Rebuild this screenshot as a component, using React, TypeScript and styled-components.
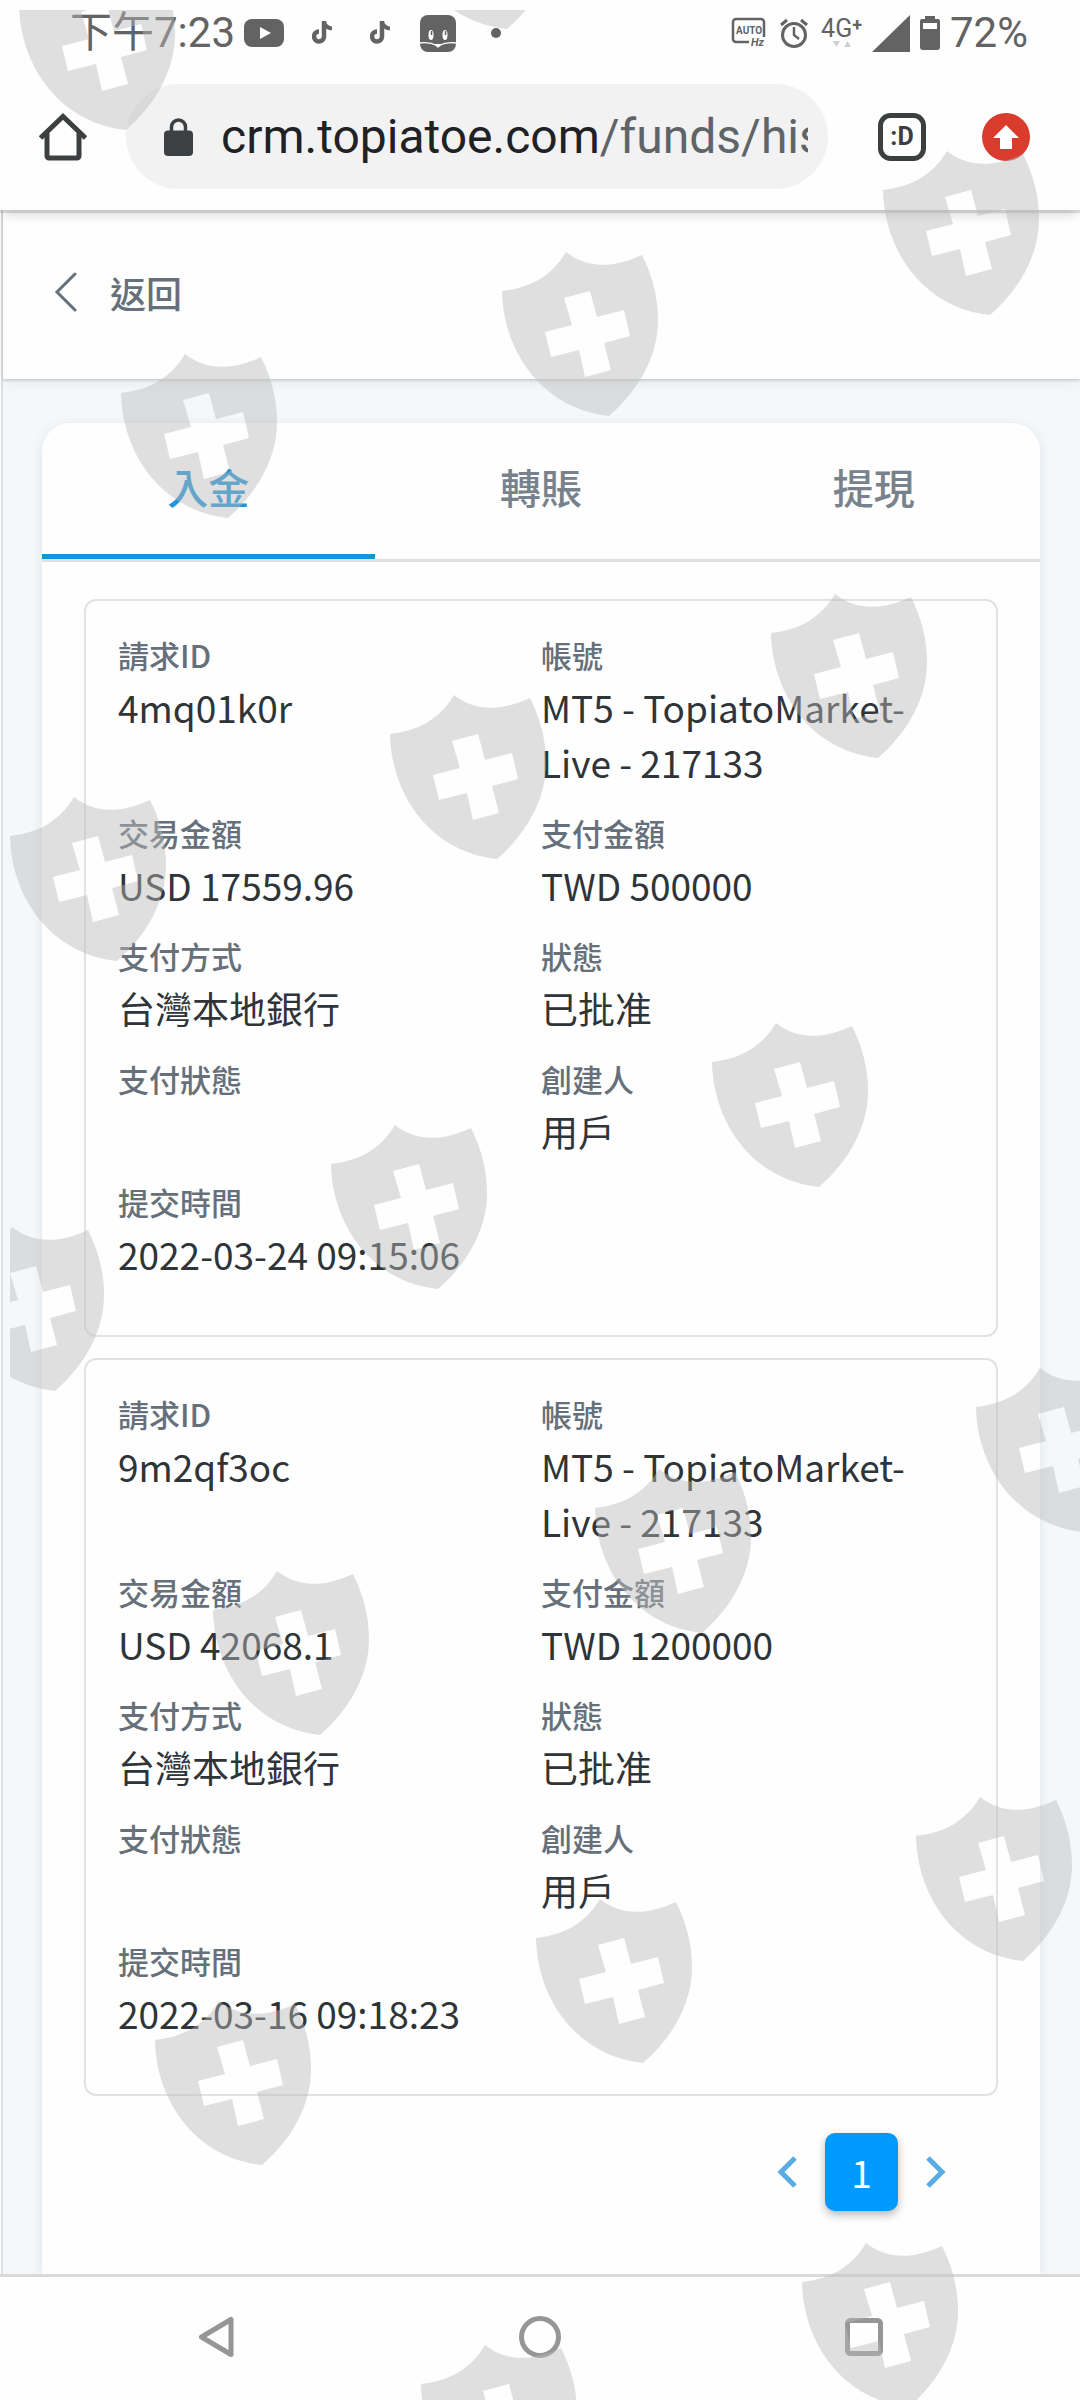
import React, { useState } from "react";
import styled, { createGlobalStyle } from "styled-components";

const GlobalStyle = createGlobalStyle`
  *, *::before, *::after { box-sizing: border-box; }
  html, body { margin: 0; padding: 0; background: #fff; }
  body { font-family: "Noto Sans CJK TC", "Noto Sans", sans-serif; }
  button { margin: 0; padding: 0; border: 0; background: none; font: inherit; color: inherit; cursor: pointer; }
  svg { display: block; flex: none; }
`;

const Screen = styled.div`
  position: relative;
  display: flex;
  flex-direction: column;
  min-height: 100vh;
  overflow: hidden;
  background: #fefefe;
`;

/* ---------- status bar ---------- */

const StatusBar = styled.div`
  display: flex;
  align-items: center;
  justify-content: space-between;
  height: 66px;
  padding: 0 52px 0 70px;
  color: #636363;
  font: 400 42px/48px Roboto, "Noto Sans CJK TC", sans-serif;
`;

const StatusGroup = styled.div`
  display: flex;
  align-items: center;
  gap: ${(p: { $gap: number }) => p.$gap}px;
`;

const NoticeSlot = styled.div`
  display: flex;
  align-items: center;
  justify-content: center;
  width: 58px;
`;

const Network = styled.div`
  display: flex;
  flex-direction: column;
  align-items: center;
  font-size: 25px;
  line-height: 22px;
`;

const NetworkName = styled.span`
  display: flex;
`;

const Plus = styled.span`
  font-size: 18px;
  line-height: 14px;
  font-weight: 700;
`;

/* ---------- browser toolbar ---------- */

const Toolbar = styled.header`
  position: relative;
  z-index: 2;
  display: flex;
  align-items: center;
  height: 144px;
  padding: 0 22px 3px 0;
  background: #fefefe;
  box-shadow: 0 3px 1px rgba(0, 0, 0, 0.12), 0 10px 10px -4px rgba(0, 0, 0, 0.12);
`;

const ToolbarButton = styled.button`
  display: flex;
  align-items: center;
  justify-content: center;
  width: ${(p: { $wide?: boolean }) => (p.$wide ? 126 : 104)}px;
  height: 105px;
`;

const AddressBar = styled.button`
  display: flex;
  flex: 1;
  align-items: center;
  gap: 28px;
  min-width: 0;
  height: 105px;
  margin-right: 22px;
  padding: 0 20px 0 38px;
  border-radius: 53px;
  background: #f2f2f3;
`;

const Address = styled.span`
  flex: 1;
  overflow: hidden;
  color: #5f6468;
  font: 400 48px/64px Roboto, sans-serif;
  text-align: left;
  white-space: nowrap;
`;

const Host = styled.span`
  color: #202124;
`;

/* ---------- page ---------- */

const Page = styled.main`
  display: flex;
  flex: 1;
  flex-direction: column;
  margin-left: 1px;
  border-left: 2px solid #dadfe3;
  background: #f4f8fb;
`;

const PageHeader = styled.div`
  position: relative;
  z-index: 1;
  display: flex;
  align-items: center;
  height: 169px;
  padding: 0 51px 6px;
  background: #fefefe;
  box-shadow: 0 2px 2px rgba(0, 0, 0, 0.12), 0 4px 12px rgba(0, 0, 0, 0.06);
`;

const BackLink = styled.a`
  display: flex;
  align-items: center;
  gap: 32px;
  color: #66707a;
  font-size: 36px;
  line-height: 54px;
  font-weight: 500;
  text-decoration: none;
`;

const Card = styled.section`
  display: flex;
  flex: 1;
  flex-direction: column;
  margin: 44px 40px 0 39px;
  border-radius: 28px 28px 0 0;
  background: #fefefe;
  box-shadow: 0 2px 12px rgba(40, 60, 80, 0.1);
`;

const TabList = styled.div`
  display: flex;
  height: 139px;
  border-bottom: 3px solid #e0e0e0;
`;

const Tab = styled.button<{ $active: boolean }>`
  flex: 1;
  border-top: 5px solid transparent;
  border-bottom: 5px solid ${(p) => (p.$active ? "#1a93d6" : "transparent")};
  color: ${(p) => (p.$active ? "#2094d8" : "#77828c")};
  font-size: 41px;
  line-height: 60px;
  font-weight: 500;
  padding-bottom: 11px;
`;

const Records = styled.div`
  display: flex;
  flex-direction: column;
  gap: 21px;
  padding: 37px 42px;
`;

const Record = styled.dl`
  display: grid;
  grid-template-columns: 1fr 1fr;
  row-gap: 21px;
  margin: 0;
  padding: 32px 32px 53px;
  border: 2px solid #e2e2e2;
  border-radius: 12px;
`;

const Field = styled.div`
  min-width: 0;
  padding-right: 32px;
`;

const Term = styled.dt`
  padding-bottom: 3px;
  color: #66707a;
  font-size: 31px;
  line-height: 44px;
  font-weight: 500;
`;

const Detail = styled.dd`
  min-height: 55px;
  margin: 0;
  color: #2f3438;
  font-size: 37px;
  line-height: 55px;
`;

const Pagination = styled.nav`
  display: flex;
  align-items: center;
  justify-content: flex-end;
  padding: 0 66px 63px;
`;

const StepButton = styled.button`
  display: flex;
  align-items: center;
  justify-content: center;
  width: 76px;
  height: 78px;
`;

const PageButton = styled.button`
  width: 73px;
  height: 78px;
  border-radius: 10px;
  background: #0099fd;
  color: #fff;
  font-size: 37px;
  line-height: 55px;
  box-shadow: 0 4px 8px rgba(40, 20, 20, 0.3);
`;

/* ---------- system navigation ---------- */

const SystemNav = styled.nav`
  display: flex;
  height: 126px;
  padding: 0 54px 3px;
  border-top: 3px solid #dadada;
  background: #fefefe;
`;

const SystemButton = styled.button`
  display: flex;
  flex: 1;
  align-items: center;
  justify-content: center;
`;

const Overlay = styled.svg`
  position: absolute;
  z-index: 3;
  top: 10px;
  left: 10px;
  width: calc(100% - 10px);
  height: calc(100% - 10px);
  overflow: hidden;
  pointer-events: none;
`;

const shields = [
  [19, -34], [400, -135],
  [883, 151], [502, 252], [121, 354],
  [771, 594], [390, 695], [10, 797],
  [712, 1023], [331, 1125], [-52, 1227],
  [976, 1368], [595, 1469], [213, 1571],
  [916, 1797], [536, 1899], [155, 2001],
  [802, 2243], [421, 2345],
];

const SHIELD =
  "M0 39C28 36 50 24 64 0C84 16 110 17 140 3C151 25 156 46 156 68C156 104 137 138 107 164C40 157 1 99 0 39Z" +
  "M62 46L70 73L43 80L49 105L77 98L83 125L109 118L102 91L128 84L122 58L95 65L88 39Z";

const ShieldPattern = () => (
  <Overlay aria-hidden="true">
    <g fill="#bbbbbb" fillOpacity="0.45" fillRule="evenodd">
      {shields.map(([x, y]) => (
        <path key={`${x}-${y}`} d={SHIELD} transform={`translate(${x - 10} ${y - 10})`} />
      ))}
    </g>
  </Overlay>
);

const NoteIcon = () => (
  <svg width="20" height="24" viewBox="0 0 20 24" fill="none" stroke="#636363">
    <path d="M12 0V16a5 5 0 1 1-5-5.500" strokeWidth="4.500" />
    <path d="M12 1c1 4 4 6 8 6.500" strokeWidth="4" />
  </svg>
);

type Entry = { label: string; value: string };

const makeRecord = (id: string, usd: string, twd: string, time: string): Entry[] => [
  { label: "請求ID", value: id },
  { label: "帳號", value: "MT5 - TopiatoMarket-Live - 217133" },
  { label: "交易金額", value: usd },
  { label: "支付金額", value: twd },
  { label: "支付方式", value: "台灣本地銀行" },
  { label: "狀態", value: "已批准" },
  { label: "支付狀態", value: "" },
  { label: "創建人", value: "用戶" },
  { label: "提交時間", value: time },
];

const records = [
  makeRecord("4mq01k0r", "USD 17559.96", "TWD 500000", "2022-03-24 09:15:06"),
  makeRecord("9m2qf3oc", "USD 42068.1", "TWD 1200000", "2022-03-16 09:18:23"),
];

const tabs = ["入金", "轉賬", "提現"];

export default function App() {
  const [active, setActive] = useState(0);

  return (
    <Screen lang="zh-Hant">
      <GlobalStyle />

      <StatusBar>
        <StatusGroup $gap={0}>
          <span>下午7:23</span>
          <NoticeSlot>
            <svg width="40" height="28" viewBox="0 0 40 28">
              <rect width="40" height="28" rx="8" fill="#636363" />
              <path d="M16 8L27 14L16 20Z" fill="#fff" />
            </svg>
          </NoticeSlot>
          <NoticeSlot><NoteIcon /></NoticeSlot>
          <NoticeSlot><NoteIcon /></NoticeSlot>
          <NoticeSlot>
            <svg width="36" height="37" viewBox="0 0 36 37">
              <rect width="36" height="37" rx="8" fill="#636363" />
              <ellipse cx="11" cy="20" rx="2.500" ry="5" fill="#fff" />
              <ellipse cx="25" cy="20" rx="2.500" ry="5" fill="#fff" />
              <path d="M11.500 16v4M25.500 16v4" stroke="#636363" strokeWidth="1.500" />
              <path d="M0 28c6-1 12 0 18 3c6-3 12-4 18-3" fill="none" stroke="#fff" strokeWidth="1.300" />
              <path d="M14 29h8l-4 4Z" fill="#fff" />
            </svg>
          </NoticeSlot>
          <NoticeSlot>
            <svg width="10" height="10" viewBox="0 0 10 10">
              <circle cx="5" cy="5" r="5" fill="#636363" />
            </svg>
          </NoticeSlot>
        </StatusGroup>

        <StatusGroup $gap={10}>
          <StatusGroup $gap={13}>
            <svg width="36" height="32" viewBox="0 0 36 32" fill="#636363">
              <path d="M18 25H5a3 3 0 0 1-3-3V5a3 3 0 0 1 3-3H30a3 3 0 0 1 3 3V20" fill="none" stroke="#636363" strokeWidth="2.500" />
              <text x="5" y="17" fontSize="10" fontWeight="700" fontFamily="Roboto, sans-serif">AUTO</text>
              <text x="20" y="29" fontSize="11" fontWeight="700" fontStyle="italic" fontFamily="Roboto, sans-serif">Hz</text>
            </svg>
            <svg width="28" height="30" viewBox="0 0 28 30" fill="none" stroke="#636363" strokeWidth="3">
              <circle cx="14" cy="17" r="11.500" />
              <path d="M14 9V17L19 21" strokeWidth="2.500" />
              <path d="M1 7L7 2M27 7L21 2" />
            </svg>
            <Network>
              <NetworkName>4G<Plus>+</Plus></NetworkName>
              <svg width="20" height="8" viewBox="0 0 20 8" fill="#cfcfcf">
                <path d="M1 1H8L4.500 7ZM12 7H19L15.500 1Z" />
              </svg>
            </Network>
          </StatusGroup>
          <svg width="38" height="37" viewBox="0 0 38 37">
            <path d="M0 37L38 0V37Z" fill="#636363" />
          </svg>
          <svg width="20" height="34" viewBox="0 0 20 34">
            <path d="M5 0H15V3H18a2 2 0 0 1 2 2V31a3 3 0 0 1-3 3H3a3 3 0 0 1-3-3V5a2 2 0 0 1 2-2H5Z" fill="#636363" />
            <path d="M3 7H17V13H3Z" fill="#fff" />
          </svg>
          <span>72%</span>
        </StatusGroup>
      </StatusBar>

      <Toolbar>
        <ToolbarButton $wide aria-label="Home">
          <svg width="48" height="48" viewBox="0 0 48 48" fill="none" stroke="#3c3f40" strokeWidth="5" strokeLinejoin="round">
            <path d="M1.500 25L24 3.500L46.500 25" strokeLinejoin="miter" />
            <path d="M8 20V43a2 2 0 0 0 2 2H38a2 2 0 0 0 2-2V20" />
          </svg>
        </ToolbarButton>
        <AddressBar aria-label="crm.topiatoe.com/funds/his">
          <svg width="29" height="38" viewBox="0 0 29 38">
            <path d="M7.500 15V9a7 7 0 0 1 14 0v6" fill="none" stroke="#3c4043" strokeWidth="3.500" />
            <rect y="12.500" width="29" height="25.500" rx="4" fill="#3c4043" />
          </svg>
          <Address><Host>crm.topiatoe.com</Host>/funds/his</Address>
        </AddressBar>
        <ToolbarButton aria-label="Tabs">
          <svg width="48" height="48" viewBox="0 0 48 48">
            <rect x="2.500" y="2.500" width="43" height="43" rx="10" fill="none" stroke="#3c3f40" strokeWidth="5" />
            <text x="24" y="32" textAnchor="middle" fontSize="25" fontWeight="700" fontFamily="Roboto, sans-serif" fill="#3c3f40">:D</text>
          </svg>
        </ToolbarButton>
        <ToolbarButton aria-label="Update">
          <svg width="48" height="48" viewBox="0 0 48 48">
            <circle cx="24" cy="24" r="24" fill="#d93b2c" />
            <path d="M24 12L37 25H30V36H18V25H11Z" fill="#fff" />
          </svg>
        </ToolbarButton>
      </Toolbar>

      <Page>
        <PageHeader>
          <BackLink href="#back">
            <svg width="24" height="40" viewBox="0 0 24 40" fill="none" stroke="#66707a" strokeWidth="3" strokeLinecap="round">
              <path d="M21 2L3 20L21 38" />
            </svg>
            返回
          </BackLink>
        </PageHeader>

        <Card>
          <TabList role="tablist">
            {tabs.map((name, i) => (
              <Tab key={name} role="tab" aria-selected={i === active} $active={i === active} onClick={() => setActive(i)}>
                {name}
              </Tab>
            ))}
          </TabList>

          <Records>
            {records.map((fields) => (
              <Record key={fields[0].value}>
                {fields.map((f) => (
                  <Field key={f.label}>
                    <Term>{f.label}</Term>
                    <Detail>{f.value}</Detail>
                  </Field>
                ))}
              </Record>
            ))}
          </Records>

          <Pagination aria-label="Pagination">
            <StepButton aria-label="Previous page">
              <svg width="20" height="32" viewBox="0 0 20 32" fill="none" stroke="#58ace3" strokeWidth="5">
                <path d="M18 2L4 16L18 30" />
              </svg>
            </StepButton>
            <PageButton aria-current="page">1</PageButton>
            <StepButton aria-label="Next page">
              <svg width="20" height="32" viewBox="0 0 20 32" fill="none" stroke="#58ace3" strokeWidth="5">
                <path d="M2 2L16 16L2 30" />
              </svg>
            </StepButton>
          </Pagination>
        </Card>
      </Page>

      <SystemNav aria-label="System">
        <SystemButton aria-label="Back">
          <svg width="36" height="42" viewBox="0 0 36 42" fill="none" stroke="#969696" strokeWidth="5" strokeLinejoin="round">
            <path d="M33 3.500V38.500L3.500 21Z" />
          </svg>
        </SystemButton>
        <SystemButton aria-label="Home screen">
          <svg width="42" height="42" viewBox="0 0 42 42" fill="none" stroke="#969696" strokeWidth="5">
            <circle cx="21" cy="21" r="18.500" />
          </svg>
        </SystemButton>
        <SystemButton aria-label="Recent apps">
          <svg width="38" height="38" viewBox="0 0 38 38" fill="none" stroke="#969696" strokeWidth="5">
            <rect x="2.500" y="2.500" width="33" height="33" rx="3" />
          </svg>
        </SystemButton>
      </SystemNav>

      <ShieldPattern />
    </Screen>
  );
}
